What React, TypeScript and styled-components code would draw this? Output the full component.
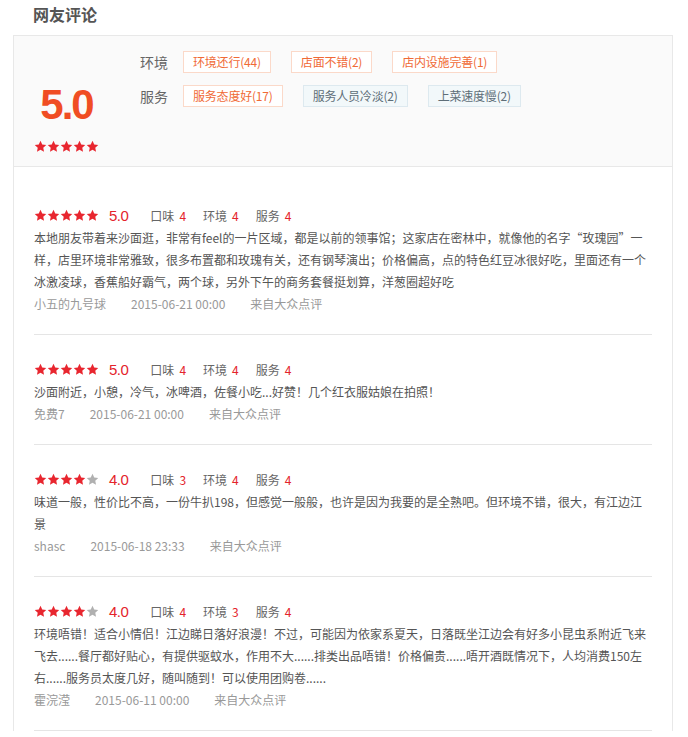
import styled, { createGlobalStyle } from "styled-components";

const GlobalStyle = createGlobalStyle`
  body {
    margin: 0;
    background: #ffffff;
    font-family: "Noto Sans CJK SC", "Noto Sans", sans-serif;
    color: #666666;
  }
`;

type Tag = { text: string; good: boolean };

const tagRows: { label: string; tags: Tag[] }[] = [
  {
    label: "环境",
    tags: [
      { text: "环境还行(44)", good: true },
      { text: "店面不错(2)", good: true },
      { text: "店内设施完善(1)", good: true },
    ],
  },
  {
    label: "服务",
    tags: [
      { text: "服务态度好(17)", good: true },
      { text: "服务人员冷淡(2)", good: false },
      { text: "上菜速度慢(2)", good: false },
    ],
  },
];

type Review = {
  stars: number;
  taste: number;
  env: number;
  service: number;
  text: string;
  user: string;
  time: string;
};

const reviews: Review[] = [
  {
    stars: 5,
    taste: 4,
    env: 4,
    service: 4,
    text: "本地朋友带着来沙面逛，非常有feel的一片区域，都是以前的领事馆；这家店在密林中，就像他的名字“玫瑰园”一样，店里环境非常雅致，很多布置都和玫瑰有关，还有钢琴演出；价格偏高，点的特色红豆冰很好吃，里面还有一个冰激凌球，香蕉船好霸气，两个球，另外下午的商务套餐挺划算，洋葱圈超好吃",
    user: "小五的九号球",
    time: "2015-06-21 00:00",
  },
  {
    stars: 5,
    taste: 4,
    env: 4,
    service: 4,
    text: "沙面附近，小憩，冷气，冰啤酒，佐餐小吃...好赞！几个红衣服姑娘在拍照！",
    user: "免费7",
    time: "2015-06-21 00:00",
  },
  {
    stars: 4,
    taste: 3,
    env: 4,
    service: 4,
    text: "味道一般，性价比不高，一份牛扒198，但感觉一般般，也许是因为我要的是全熟吧。但环境不错，很大，有江边江景",
    user: "shasc",
    time: "2015-06-18 23:33",
  },
  {
    stars: 4,
    taste: 4,
    env: 3,
    service: 4,
    text: "环境唔错！适合小情侣！江边睇日落好浪漫！不过，可能因为依家系夏天，日落既坐江边会有好多小昆虫系附近飞来飞去......餐厅都好贴心，有提供驱蚊水，作用不大......排类出品唔错！价格偏贵......唔开酒既情况下，人均消费150左右......服务员太度几好，随叫随到！可以使用团购卷......",
    user: "霍浣滢",
    time: "2015-06-11 00:00",
  },
];

const Star = ({ on, size }: { on: boolean; size: number }) => (
  <svg width={size} height={size} viewBox="0 0 24 24">
    <polygon
      points="12,1.5 15.2,8.3 22.6,9.2 17.1,14.3 18.5,21.7 12,18 5.5,21.7 6.9,14.3 1.4,9.2 8.8,8.3"
      fill={on ? "#e8262f" : "#b0b0b0"}
    />
  </svg>
);

const Stars = ({ count, size }: { count: number; size: number }) => (
  <StarRow>
    {[0, 1, 2, 3, 4].map((i) => (
      <Star key={i} on={i < count} size={size} />
    ))}
  </StarRow>
);

const App = () => {
  return (
    <Page>
      <GlobalStyle />
      <Title>网友评论</Title>
      <Panel>
        <Summary>
          <ScoreBox>
            <BigScore>5.0</BigScore>
            <Stars count={5} size={13} />
          </ScoreBox>
          <TagArea>
            {tagRows.map((row) => (
              <TagRow key={row.label}>
                <TagLabel>{row.label}</TagLabel>
                {row.tags.map((t) => (
                  <TagItem key={t.text} $good={t.good}>
                    {t.text}
                  </TagItem>
                ))}
              </TagRow>
            ))}
          </TagArea>
        </Summary>
        <ReviewList>
          {reviews.map((r) => (
            <ReviewItem key={r.user}>
              <RatingLine>
                <Stars count={r.stars} size={13} />
                <SmallScore>{r.stars.toFixed(1)}</SmallScore>
                <SubRate>
                  口味<em>{r.taste}</em>
                </SubRate>
                <SubRate>
                  环境<em>{r.env}</em>
                </SubRate>
                <SubRate>
                  服务<em>{r.service}</em>
                </SubRate>
              </RatingLine>
              <ReviewText>{r.text}</ReviewText>
              <Meta>
                <span>{r.user}</span>
                <span>{r.time}</span>
                <span>来自大众点评</span>
              </Meta>
            </ReviewItem>
          ))}
        </ReviewList>
      </Panel>
    </Page>
  );
};

export default App;

const Page = styled.div`
  width: 688px;
  padding-left: 13px;
  box-sizing: border-box;
`;

const Title = styled.h2`
  margin: 0;
  padding-left: 20px;
  height: 35px;
  line-height: 29px;
  font-size: 16px;
  font-weight: bold;
  color: #555555;
`;

const Panel = styled.div`
  width: 660px;
  box-sizing: border-box;
  border: 1px solid #e8e8e8;
  border-bottom: none;
`;

const Summary = styled.div`
  display: flex;
  height: 131px;
  box-sizing: border-box;
  padding-top: 15px;
  background: #fafafa;
  border-bottom: 1px solid #e8e8e8;
`;

const ScoreBox = styled.div`
  width: 105px;
  display: flex;
  flex-direction: column;
  align-items: center;
  padding-top: 33px;
`;

const BigScore = styled.div`
  font-family: "Liberation Sans", Arial, sans-serif;
  font-size: 42px;
  line-height: 42px;
  font-weight: bold;
  letter-spacing: -2px;
  color: #f04d23;
  margin-bottom: 14px;
`;

const StarRow = styled.div`
  display: flex;
`;

const TagArea = styled.div`
  margin-left: 21px;
`;

const TagRow = styled.div`
  display: flex;
  align-items: center;
  margin-bottom: 12px;
`;

const TagLabel = styled.span`
  font-size: 14px;
  color: #666666;
  width: 28px;
  margin-right: 15px;
`;

const TagItem = styled.span<{ $good: boolean }>`
  height: 22px;
  line-height: 20px;
  box-sizing: border-box;
  padding: 0 9px;
  margin-right: 20px;
  font-size: 12px;
  letter-spacing: -0.2px;
  border: 1px solid ${(p) => (p.$good ? "#fbd9c9" : "#dde9ef")};
  background: ${(p) => (p.$good ? "#ffffff" : "#f2f8fa")};
  color: ${(p) => (p.$good ? "#f06a36" : "#5e6e78")};
`;

const ReviewList = styled.div`
  padding: 14px 20px 0;
`;

const ReviewItem = styled.div`
  padding: 22px 0 19px;
  border-bottom: 1px solid #e5e5e5;
`;

const RatingLine = styled.div`
  display: flex;
  align-items: center;
  height: 24px;
  font-size: 12px;
`;

const SmallScore = styled.span`
  font-family: "Liberation Sans", Arial, sans-serif;
  font-size: 15px;
  letter-spacing: -0.5px;
  color: #e4232b;
  margin: 0 22px 0 10px;
`;

const SubRate = styled.span`
  color: #666666;
  margin-right: 17px;

  em {
    font-style: normal;
    color: #e4232b;
    margin-left: 5px;
  }
`;

const ReviewText = styled.p`
  margin: 0;
  font-size: 12px;
  line-height: 22px;
  color: #555555;
`;

const Meta = styled.div`
  display: flex;
  font-size: 12px;
  line-height: 22px;
  color: #999999;

  span {
    margin-right: 25px;
  }
`;
